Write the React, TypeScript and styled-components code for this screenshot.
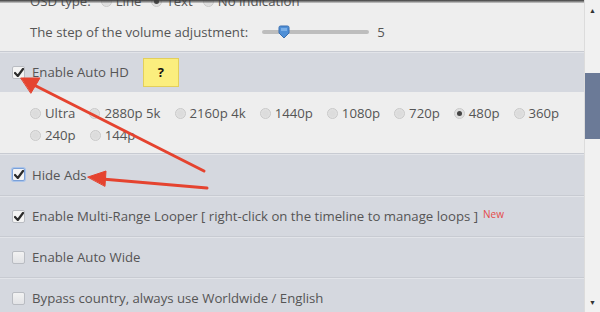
import React from "react";
import styled, { createGlobalStyle } from "styled-components";

const Global = createGlobalStyle`
  html, body { margin: 0; padding: 0; }
  body { font-family: "Open Sans", "Liberation Sans", sans-serif; font-size: 13.2px; color: #555; background: #eee; }
`;

const Frame = styled.div`
  width: 600px;
  height: 312px;
  display: flex;
  overflow: hidden;
  position: relative;
`;

const Content = styled.div`
  width: 584px;
  height: 312px;
  overflow: hidden;
  position: relative;
`;

const Scroller = styled.div`
  display: flex;
  flex-direction: column;
  margin-top: -14px;
`;

const TopShade = styled.div`
  position: absolute;
  left: 0;
  top: 0;
  right: 0;
  height: 3px;
  background: linear-gradient(#3a3a3a, rgba(80, 80, 80, 0.2));
  z-index: 3;
`;

const LightSection = styled.div<{ $pad?: string }>`
  background: #eeeeee;
  display: flex;
  flex-direction: column;
  padding: ${(p) => p.$pad || "0"};
`;

const Line = styled.div<{ $h?: number }>`
  height: ${(p) => p.$h || 30}px;
  display: flex;
  align-items: center;
  padding-left: 30px;
  white-space: nowrap;
`;

const GrayRow = styled.div<{ $h: number }>`
  height: ${(p) => p.$h}px;
  background: #d5d8df;
  border-top: 1px solid #c8cbd2;
  box-shadow: inset 0 1px 0 #e2e4e9;
  display: flex;
  align-items: center;
  padding-left: 12px;
  white-space: nowrap;
  box-sizing: border-box;
`;

const Box = styled.span<{ $focus?: boolean; $checked?: boolean }>`
  width: 13px;
  height: 13px;
  box-sizing: border-box;
  border: 1px solid ${(p) => (p.$focus ? "#7aa0d8" : "#b9bcc2")};
  box-shadow: ${(p) => (p.$focus ? "0 0 0 1px #a9c3ea" : "none")};
  border-radius: 2px;
  background: ${(p) => (p.$checked ? "#f4f4f4" : "linear-gradient(#f2f2f2, #e2e3e6)")};
  display: inline-flex;
  align-items: center;
  justify-content: center;
  margin-right: 7px;
  flex: none;
`;

const Label = styled.span`
  color: #555;
`;

const HelpBox = styled.span`
  margin-left: 14px;
  width: 36px;
  height: 29px;
  box-sizing: border-box;
  background: #fbee7e;
  border: 1px solid #e3cf5a;
  display: inline-flex;
  align-items: center;
  justify-content: center;
  font-weight: 700;
  color: #111;
  font-size: 13px;
`;

const RadioGroup = styled.div<{ $gap?: number; $ml?: number }>`
  display: flex;
  align-items: center;
  gap: ${(p) => p.$gap ?? 14}px;
  margin-left: ${(p) => p.$ml ?? 0}px;
`;

const RadioItem = styled.span`
  display: inline-flex;
  align-items: center;
  gap: 4px;
`;

const RadioCircle = styled.span<{ $checked?: boolean }>`
  width: 11px;
  height: 11px;
  box-sizing: border-box;
  border-radius: 50%;
  border: 1px solid #c9c9c9;
  background: radial-gradient(circle, #dcdcdc 40%, #e8e8e8 100%);
  display: inline-flex;
  align-items: center;
  justify-content: center;
  flex: none;
  &::after {
    content: "";
    display: ${(p) => (p.$checked ? "block" : "none")};
    width: 5px;
    height: 5px;
    border-radius: 50%;
    background: #444;
  }
`;

const Slider = styled.div`
  margin-left: 14px;
  width: 107px;
  height: 4px;
  background: #bdbdbd;
  border-radius: 2px;
  position: relative;
  margin-right: 8px;
`;

const Thumb = styled.svg`
  position: absolute;
  left: 16px;
  top: -5px;
`;

const New = styled.sup`
  color: #e44a4a;
  font-size: 10px;
  margin-left: 5px;
  position: relative;
  top: -2px;
`;

const Scrollbar = styled.div`
  width: 16px;
  height: 312px;
  background: #f1f1f1;
  border-left: 1px solid #dcdcdc;
  box-sizing: border-box;
  display: flex;
  flex-direction: column;
  align-items: center;
`;

const ScrollArrow = styled.div`
  height: 20px;
  display: flex;
  align-items: center;
  justify-content: center;
  font-size: 7px;
  color: #333;
  width: 100%;
`;

const Track = styled.div`
  flex: 1;
  width: 100%;
  padding-top: 53px;
  box-sizing: border-box;
`;

const ThumbBar = styled.div`
  height: 66px;
  width: 100%;
  background: #6b7a97;
`;

const Overlay = styled.svg`
  position: absolute;
  left: 0;
  top: 0;
  pointer-events: none;
  z-index: 5;
`;

const Check = () => (
  <svg width="10" height="9" viewBox="0 0 10 9">
    <path d="M1 5 L3.8 8 L9 1" fill="none" stroke="#2b2b2b" strokeWidth="2.2" strokeLinecap="round" strokeLinejoin="round" />
  </svg>
);

const CheckRow = ({ h, checked, focus, children }: { h: number; checked?: boolean; focus?: boolean; children: React.ReactNode }) => (
  <GrayRow $h={h}>
    <Box $checked={checked} $focus={focus}>{checked && <Check />}</Box>
    {children}
  </GrayRow>
);

const Radio = ({ label, checked }: { label: string; checked?: boolean }) => (
  <RadioItem>
    <RadioCircle $checked={checked} />
    <Label>{label}</Label>
  </RadioItem>
);

const row1 = ["Ultra", "2880p 5k", "2160p 4k", "1440p", "1080p", "720p", "480p", "360p"];
const row2 = ["240p", "144p"];

export default function App() {
  return (
    <>
      <Global />
      <Frame>
        <Content>
          <TopShade />
          <Scroller>
            <LightSection $pad="0 0 3px 0">
              <Line $h={30}>
                <Label>OSD type:</Label>
                <RadioGroup $gap={10} $ml={10}>
                  <Radio label="Line" />
                  <Radio label="Text" checked />
                  <Radio label="No indication" />
                </RadioGroup>
              </Line>
              <Line $h={32}>
                <Label>The step of the volume adjustment:</Label>
                <Slider>
                  <Thumb width="12" height="14" viewBox="0 0 12 14">
                    <path d="M1 2.5 Q1 1 2.5 1 L9.5 1 Q11 1 11 2.5 L11 8 L6 13 L1 8 Z" fill="#4f8fd6" stroke="#3a6fb0" strokeWidth="1" />
                    <path d="M3 3 L9 3 L9 6 L3 6 Z" fill="#8dbcef" opacity="0.7" />
                  </Thumb>
                </Slider>
                <Label>5</Label>
              </Line>
            </LightSection>
            <CheckRow h={41} checked>
              <Label>Enable Auto HD</Label>
              <HelpBox>?</HelpBox>
            </CheckRow>
            <LightSection $pad="10px 0 7px 0">
              <Line $h={22}>
                <RadioGroup>
                  {row1.map((r) => (
                    <Radio key={r} label={r} checked={r === "480p"} />
                  ))}
                </RadioGroup>
              </Line>
              <Line $h={22}>
                <RadioGroup>
                  {row2.map((r) => (
                    <Radio key={r} label={r} />
                  ))}
                </RadioGroup>
              </Line>
            </LightSection>
            <CheckRow h={42} checked focus>
              <Label>Hide Ads</Label>
            </CheckRow>
            <CheckRow h={41} checked>
              <Label>Enable Multi-Range Looper [ right-click on the timeline to manage loops ]</Label>
              <New>New</New>
            </CheckRow>
            <CheckRow h={41}>
              <Label>Enable Auto Wide</Label>
            </CheckRow>
            <CheckRow h={41}>
              <Label>Bypass country, always use Worldwide / English</Label>
            </CheckRow>
          </Scroller>
          <Overlay width="584" height="312" viewBox="0 0 584 312">
            <g fill="#e5432f" stroke="#e5432f" strokeLinecap="round">
              <line x1="204" y1="171" x2="34" y2="85" strokeWidth="3" />
              <polygon points="21,78 40,78 31,93" strokeWidth="1" strokeLinejoin="round" />
              <line x1="207" y1="188" x2="102" y2="179" strokeWidth="3" />
              <polygon points="88,177 106,171 105,186" strokeWidth="1" strokeLinejoin="round" />
            </g>
          </Overlay>
        </Content>
        <Scrollbar>
          <ScrollArrow>▲</ScrollArrow>
          <Track>
            <ThumbBar />
          </Track>
          <ScrollArrow>▼</ScrollArrow>
        </Scrollbar>
      </Frame>
    </>
  );
}
